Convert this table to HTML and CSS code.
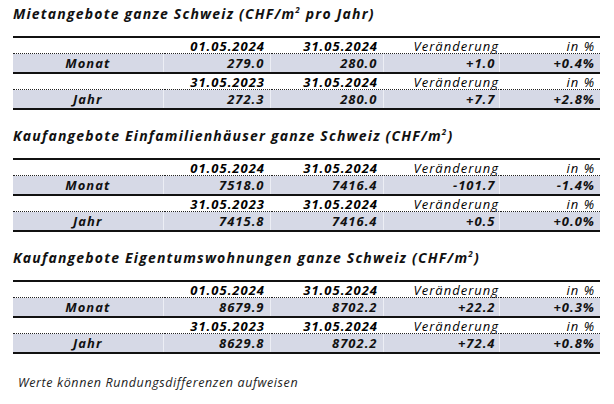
FILE: index.html
```html
<!DOCTYPE html>
<html lang="de">
<head>
<meta charset="utf-8">
<link rel="stylesheet" href="styles.css">
</head>
<body>
<div class="page">
  <section class="block first">
    <h2 class="title">Mietangebote ganze Schweiz (CHF/m<sup>2</sup> pro Jahr)</h2>
    <table class="tbl">
      <colgroup><col class="c1"><col class="c2"><col class="c3"><col class="c4"><col class="c5"></colgroup>
      <tr class="head top"><td></td><td class="b">01.05.2024</td><td class="b">31.05.2024</td><td>Veränderung</td><td>in %</td></tr>
      <tr class="data"><td class="lbl">Monat</td><td>279.0</td><td>280.0</td><td>+1.0</td><td>+0.4%</td></tr>
      <tr class="head"><td></td><td class="b">31.05.2023</td><td class="b">31.05.2024</td><td>Veränderung</td><td>in %</td></tr>
      <tr class="data"><td class="lbl">Jahr</td><td>272.3</td><td>280.0</td><td>+7.7</td><td>+2.8%</td></tr>
    </table>
  </section>
  <section class="block">
    <h2 class="title">Kaufangebote Einfamilienhäuser ganze Schweiz (CHF/m<sup>2</sup>)</h2>
    <table class="tbl">
      <colgroup><col class="c1"><col class="c2"><col class="c3"><col class="c4"><col class="c5"></colgroup>
      <tr class="head top"><td></td><td class="b">01.05.2024</td><td class="b">31.05.2024</td><td>Veränderung</td><td>in %</td></tr>
      <tr class="data"><td class="lbl">Monat</td><td>7518.0</td><td>7416.4</td><td>-101.7</td><td>-1.4%</td></tr>
      <tr class="head"><td></td><td class="b">31.05.2023</td><td class="b">31.05.2024</td><td>Veränderung</td><td>in %</td></tr>
      <tr class="data"><td class="lbl">Jahr</td><td>7415.8</td><td>7416.4</td><td>+0.5</td><td>+0.0%</td></tr>
    </table>
  </section>
  <section class="block">
    <h2 class="title">Kaufangebote Eigentumswohnungen ganze Schweiz (CHF/m<sup>2</sup>)</h2>
    <table class="tbl">
      <colgroup><col class="c1"><col class="c2"><col class="c3"><col class="c4"><col class="c5"></colgroup>
      <tr class="head top"><td></td><td class="b">01.05.2024</td><td class="b">31.05.2024</td><td>Veränderung</td><td>in %</td></tr>
      <tr class="data"><td class="lbl">Monat</td><td>8679.9</td><td>8702.2</td><td>+22.2</td><td>+0.3%</td></tr>
      <tr class="head"><td></td><td class="b">31.05.2023</td><td class="b">31.05.2024</td><td>Veränderung</td><td>in %</td></tr>
      <tr class="data"><td class="lbl">Jahr</td><td>8629.8</td><td>8702.2</td><td>+72.4</td><td>+0.8%</td></tr>
    </table>
  </section>
  <p class="note">Werte können Rundungsdifferenzen aufweisen</p>
</div>
</body>
</html>
```
FILE: styles.css
```css
html, body {
  margin: 0;
  padding: 0;
  background: #ffffff;
}
.page {
  width: 614px;
  height: 404px;
  font-family: "Open Sans", "Noto Sans", sans-serif;
  color: #111;
  padding: 0 14px 0 13px;
  box-sizing: border-box;
}
.block {
  padding-top: 16px;
}
.block.first {
  padding-top: 4px;
}
.title {
  margin: 0 0 12px 0;
  font-size: 14px;
  line-height: 20px;
  font-weight: bold;
  font-style: italic;
  letter-spacing: 1.2px;
  white-space: nowrap;
}
.title sup {
  font-size: 8px;
  line-height: 0;
  vertical-align: 6px;
}
.tbl {
  width: 587px;
  border-collapse: collapse;
  table-layout: fixed;
  font-size: 13px;
  font-style: italic;
}
.c1 { width: 150px; }
.c2 { width: 107px; }
.c3 { width: 113px; }
.c4 { width: 116px; }
.c5 { width: 101px; }
.tbl td {
  padding: 0 5px 0 0;
  text-align: right;
  white-space: nowrap;
  line-height: 14px;
  letter-spacing: 1px;
}
.tbl tr.head td {
  height: 15px;
  border-bottom: 1px dotted #222;
  font-weight: normal;
  vertical-align: bottom;
  color: #000;
}
.tbl tr.head td.b {
  font-weight: bold;
}
.tbl tr.head.top td {
  border-top: 2px solid #111;
}
.tbl tr.data td {
  height: 18px;
  background: #d6d9e6;
  font-weight: bold;
  border-bottom: 2px solid #111;
  border-left: 1px solid #eceef5;
}
.tbl tr.data td:first-child {
  border-left: none;
}
.tbl tr.data td.lbl {
  text-align: center;
  padding: 0;
}
.tbl tr.head td:nth-child(4) {
  padding-right: 0;
}
.tbl tr.data td:nth-child(4) {
  padding-right: 3px;
}
.note {
  margin: 21px 0 0 5px;
  font-size: 12.5px;
  font-style: italic;
  line-height: 16px;
  letter-spacing: 0.6px;
  color: #222;
}
```
